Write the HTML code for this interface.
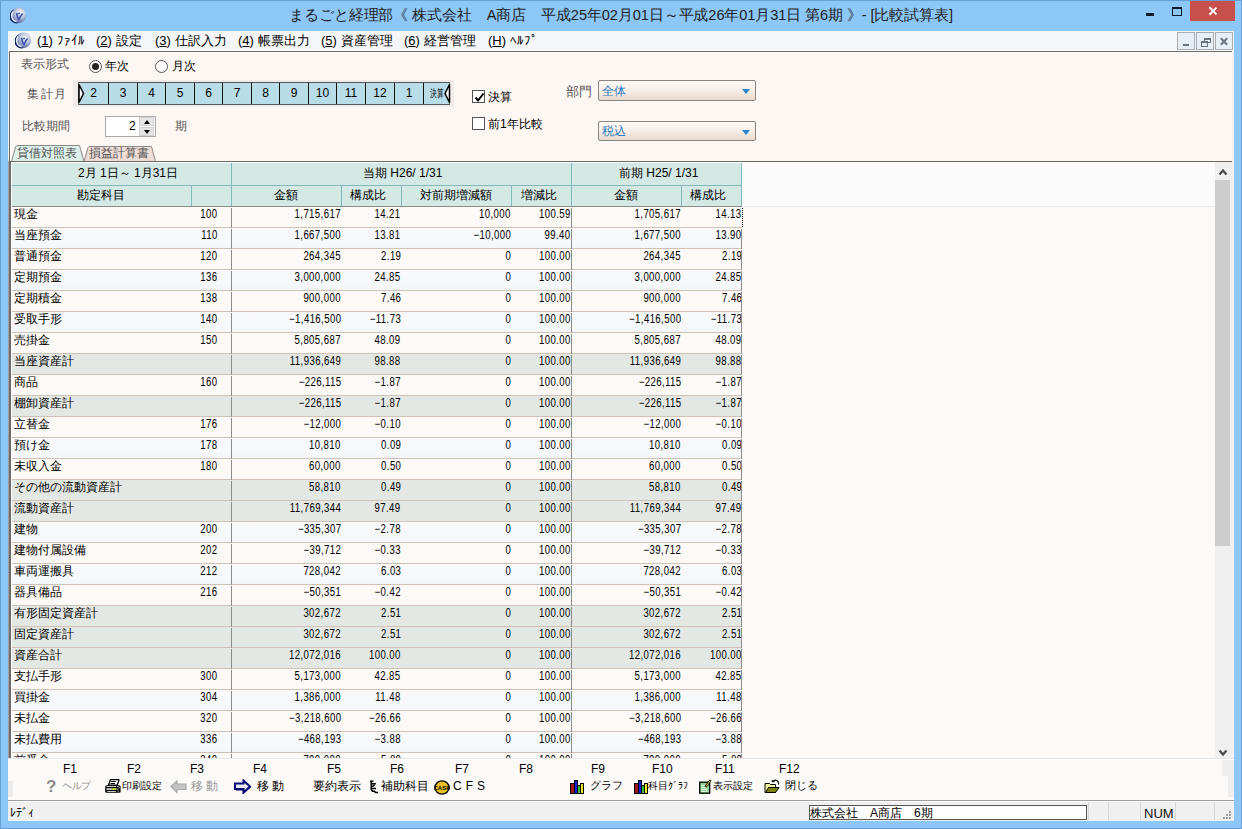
<!DOCTYPE html>
<html><head><meta charset="utf-8"><title>比較試算表</title>
<style>
*{box-sizing:border-box;margin:0;padding:0}
html,body{width:1242px;height:829px;overflow:hidden}
body{position:relative;background:#8cc7f7;font-family:"Liberation Sans",sans-serif;font-size:12px;color:#000;line-height:1}
.a{position:absolute}
#frame{position:absolute;left:0;top:0;width:1242px;height:829px;border:1px solid #6a9fd3}
/* title */
#ttl{position:absolute;left:0;top:8px;width:1242px;text-align:center;font-size:14.6px;letter-spacing:-0.1px;color:#1e1e1e;white-space:nowrap}
.ico{position:absolute;width:16px;height:16px;border-radius:50%;background:radial-gradient(circle at 40% 35%,#f4f6fb 0,#aab8d8 35%,#4f66a8 70%,#1c2f74 100%)}
#close{position:absolute;left:1190px;top:1px;width:45px;height:20px;background:#c7504c}
#close:before,#close:after{content:"";position:absolute;left:22px;top:5px;width:1.6px;height:10px;background:#fff;transform:rotate(45deg)}
#close:after{transform:rotate(-45deg)}
#min{position:absolute;left:1146px;top:13px;width:8px;height:3px;background:#0e1a2a}
#max{position:absolute;left:1172px;top:7px;width:10px;height:9px;border:1px solid #0e1a2a;border-top-width:2px}
/* menu */
#menu{position:absolute;left:8px;top:31px;width:1226px;height:20px;background:#f5f6f7;border-bottom:1px solid #fff}
.mi{position:absolute;top:34px;font-size:13px;color:#000;white-space:nowrap}
.mdi{position:absolute;top:32px;width:18px;height:18px;border:1px solid #a4acb4;background:#e6eef6}
/* form */
#form{position:absolute;left:9px;top:51px;width:1223px;height:110px;background:#fdf7f3;border-top:1px solid #6c6864;border-left:1px solid #6c6864}
#form:before{content:"";position:absolute;left:0;top:0;right:0;height:1px;background:#fff}
#form:after{content:"";position:absolute;left:0;top:0;bottom:0;width:1px;background:#fff}
.lbl{position:absolute;color:#555;font-size:12px;white-space:nowrap}
.txt{position:absolute;color:#000;font-size:12px;white-space:nowrap}
.radio{position:absolute;width:13px;height:13px;border-radius:50%;border:1px solid #555;background:#fff}
.radio.on:after{content:"";position:absolute;left:2px;top:2px;width:7px;height:7px;border-radius:50%;background:#222}
.chk{position:absolute;width:13px;height:13px;border:1px solid #555;background:#fff}
#strip{position:absolute;left:73px;top:80px;width:381px;height:27px;background:#f0ecea}
#months{position:absolute;left:78px;top:82px;width:372px;height:23px;background:#b8dce8;border:1px solid #555}
.mc{position:absolute;top:0;height:21px;border-left:1px solid #111;font-size:12px;text-align:center;line-height:21px}
.spin{position:absolute;left:105px;top:116px;width:51px;height:21px;border:1px solid #aaa;background:#fff}
.dd{position:absolute;left:598px;width:158px;height:21px;border:1px solid #8a8480;border-radius:2px;background:linear-gradient(#fffaf6,#f4ebe4 60%,#e8d8cc)}
.dd span{position:absolute;left:3px;top:4px;color:#2f7dbf;font-size:12px}
.dd:after{content:"";position:absolute;right:5px;top:8px;border-left:4px solid transparent;border-right:4px solid transparent;border-top:5px solid #2a86c8}
/* tabs */
.tab{position:absolute;top:145px;height:16px;font-size:12px;color:#555;white-space:nowrap}
/* grid */
#grid{position:absolute;left:9px;top:161px;width:1223px;height:597px;background:#fdf9f7;border-top:1px solid #6c6864;border-left:2px solid #6c6c6c;overflow:hidden}
#gridin{position:absolute;left:10px;top:162px;width:1205px;height:596px;overflow:hidden}
.hd{position:absolute;background:#d4e8e4}
.ht{position:absolute;font-size:12px;white-space:nowrap}
.tl{position:absolute;background:#80b8bc}
.vl{position:absolute;top:207px;width:1px;height:551px;background:#8c8c8c}
.row{position:absolute;left:12px;width:730px;height:21px;background:#fdf9f6;border-bottom:1px solid #d2c2b6}
.row.alt{background:linear-gradient(#f9f9fa,#f4f7f9)}
.row.sub{background:#e4e8e4}
.row span{position:absolute;top:1px;white-space:nowrap}
.nm{left:2px}
.n{text-align:right;letter-spacing:0.5px;transform:scaleX(0.8);transform-origin:100% 50%}
.cd{right:524px}
.c1{right:401px}
.c2{right:341px}
.c3{right:231px}
.c4{right:171px}
.c5{right:61px}
.c6{right:0px}
#sb{position:absolute;left:1215px;top:162px;width:17px;height:596px;background:#efefef}
#thumb{position:absolute;left:1215px;top:180px;width:15px;height:366px;background:#cdcdcd}
/* fkeys */
#fbar{position:absolute;left:8px;top:758px;width:1226px;height:43px;background:#fcfaf9;border-top:1px solid #e6e6e6;border-bottom:1px solid #a0a0a0;box-shadow:inset 0 1px 0 #fff}
.fk{position:absolute;top:763px;font-size:12px;white-space:nowrap}
.fb{position:absolute;top:780px;font-size:12px;white-space:nowrap}
/* status */
#status{position:absolute;left:8px;top:801px;width:1226px;height:20px;background:#f0f0f0;border-top:1px solid #fff}

.sbtn{position:absolute;width:15px;height:9px;background:#e6e6e6;border:1px solid #d0d0d0}
.sbtn i{position:absolute;left:3.5px;border-left:3.5px solid transparent;border-right:3.5px solid transparent}
.sbtn i.up{top:1.5px;border-bottom:4px solid #000}
.sbtn i.dn{top:2px;border-top:4px solid #000}
.mx{position:absolute;left:7px;top:4px;width:2px;height:9px;background:#6a7480;transform:rotate(45deg)}
.mx.m2{transform:rotate(-45deg)}
.sep{position:absolute;top:802px;width:1px;height:18px;background:#d8d8d8}
.v{position:absolute;top:1px;width:1px;height:20px;background:#8c8c8c}

</style></head><body>
<div id="frame"></div>
<svg class="a" style="left:10px;top:7px" width="17" height="17" viewBox="0 0 17 17"><defs><radialGradient id="g1" cx="0.62" cy="0.35" r="0.7"><stop offset="0" stop-color="#fbfbff"/><stop offset="0.45" stop-color="#c0c8e0"/><stop offset="0.85" stop-color="#6a78b0"/><stop offset="1" stop-color="#2a3878"/></radialGradient></defs><circle cx="8.3" cy="8.3" r="7.8" fill="url(#g1)"/><path d="M4 2.5 A7 7 0 0 0 9 16 A8 8 0 0 1 4 2.5Z" fill="#102060"/><path d="M3.2 4.5 A6 6 0 0 0 6.5 14.5" fill="none" stroke="#e8f0ff" stroke-width="1.3"/><path d="M6.5 6 Q7.5 11 9 12.5 Q10.5 9 12.5 6.5" fill="none" stroke="#3850a8" stroke-width="1.6"/><circle cx="9" cy="6.5" r="1" fill="#3850a8"/></svg>
<div id="ttl">まるごと経理部《 株式会社　A商店　平成25年02月01日～平成26年01月31日 第6期 》- [比較試算表]</div>
<div id="min"></div><div id="max"></div><div id="close"></div>
<div id="menu"></div>
<svg class="a" style="left:15px;top:32px" width="17" height="17" viewBox="0 0 17 17"><defs><radialGradient id="g2" cx="0.62" cy="0.35" r="0.7"><stop offset="0" stop-color="#fbfbff"/><stop offset="0.45" stop-color="#c0c8e0"/><stop offset="0.85" stop-color="#6a78b0"/><stop offset="1" stop-color="#2a3878"/></radialGradient></defs><circle cx="8.3" cy="8.3" r="7.8" fill="url(#g2)"/><path d="M4 2.5 A7 7 0 0 0 9 16 A8 8 0 0 1 4 2.5Z" fill="#102060"/><path d="M3.2 4.5 A6 6 0 0 0 6.5 14.5" fill="none" stroke="#e8f0ff" stroke-width="1.3"/><path d="M6.5 6 Q7.5 11 9 12.5 Q10.5 9 12.5 6.5" fill="none" stroke="#3850a8" stroke-width="1.6"/><circle cx="9" cy="6.5" r="1" fill="#3850a8"/></svg>
<div class="mi" style="left:37px">(<u>1</u>) ﾌｧｲﾙ</div>
<div class="mi" style="left:96px">(<u>2</u>) 設定</div>
<div class="mi" style="left:155px">(<u>3</u>) 仕訳入力</div>
<div class="mi" style="left:238px">(<u>4</u>) 帳票出力</div>
<div class="mi" style="left:321px">(<u>5</u>) 資産管理</div>
<div class="mi" style="left:404px">(<u>6</u>) 経営管理</div>
<div class="mi" style="left:488px">(<u>H</u>) ﾍﾙﾌﾟ</div>
<div class="mdi" style="left:1177px"><i style="position:absolute;left:5px;top:11px;width:6px;height:2px;background:#6a7480"></i></div>
<div class="mdi" style="left:1196px"><i style="position:absolute;left:7px;top:5px;width:7px;height:5px;border:1px solid #6a7480;border-top-width:2px"></i><i style="position:absolute;left:4px;top:8px;width:7px;height:6px;border:1px solid #6a7480;border-top-width:2px;background:#e6eef6"></i></div>
<div class="mdi" style="left:1215px"><i class="mx"></i><i class="mx m2"></i></div>
<div class="a" style="left:8px;top:51px;width:1226px;height:750px;background:#f4f2f0"></div>
<div id="form"></div>
<div class="lbl" style="left:21px;top:58px">表示形式</div>
<div class="radio on" style="left:89px;top:60px"></div><div class="txt" style="left:105px;top:60px">年次</div>
<div class="radio" style="left:155px;top:60px"></div><div class="txt" style="left:172px;top:60px">月次</div>
<div class="lbl" style="left:27px;top:88px;letter-spacing:1.5px">集計月</div>
<div id="strip"></div>
<div id="months">
<div class="mc" style="left:0;width:29px;border-left:0">2</div>
<div class="mc" style="left:29px;width:29px">3</div>
<div class="mc" style="left:58px;width:28px">4</div>
<div class="mc" style="left:86px;width:29px">5</div>
<div class="mc" style="left:115px;width:28px">6</div>
<div class="mc" style="left:143px;width:29px">7</div>
<div class="mc" style="left:172px;width:28px">8</div>
<div class="mc" style="left:200px;width:29px">9</div>
<div class="mc" style="left:229px;width:28px">10</div>
<div class="mc" style="left:257px;width:29px">11</div>
<div class="mc" style="left:286px;width:29px">12</div>
<div class="mc" style="left:315px;width:29px">1</div>
<div class="mc" style="left:344px;width:27px;font-size:0"><span style="position:absolute;left:6px;top:5px;font-size:11px;line-height:1;transform:scaleX(0.62);transform-origin:0 0;white-space:nowrap">決算</span></div>
</div>
<svg class="a" style="left:78px;top:83px" width="8" height="21"><path d="M1 1.5 L5.5 10.5 L1 19.5 Z" fill="#fff" stroke="#000" stroke-width="1.5"/></svg>
<svg class="a" style="left:443px;top:83px" width="8" height="21"><path d="M6.5 1.5 L2 10.5 L6.5 19.5 Z" fill="#fff" stroke="#000" stroke-width="1.5"/></svg>
<div class="lbl" style="left:22px;top:120px">比較期間</div>
<div class="spin"></div>
<div class="txt" style="left:129px;top:120px">2</div>
<div class="sbtn" style="left:139px;top:117px"><i class="up"></i></div>
<div class="sbtn" style="left:139px;top:127px"><i class="dn"></i></div>
<div class="lbl" style="left:175px;top:120px">期</div>
<div class="chk" style="left:472px;top:90px"><svg style="position:absolute;left:1px;top:1px" width="11" height="11"><path d="M1.5 5.5 L4 8.5 L9.5 1.5" fill="none" stroke="#000" stroke-width="2"/></svg></div><div class="txt" style="left:488px;top:91px">決算</div>
<div class="chk" style="left:472px;top:117px"></div><div class="txt" style="left:488px;top:118px">前1年比較</div>
<div class="lbl" style="left:566px;top:86px;font-size:12.5px">部門</div>
<div class="dd" style="top:80px"><span>全体</span></div>
<div class="dd" style="top:121px;height:20px"><span style="top:3px">税込</span></div>
<svg class="a" style="left:0;top:140px" width="170" height="22">
<path d="M11.5 21.5 L15.5 7 Q16 5.5 18 5.5 L79.5 5.5 L84 21.5 Z" fill="#dcefe9" stroke="#8a8a8a" stroke-width="1"/>
<path d="M84 21.5 L88 7.5 Q88.5 6.5 90 6.5 L151.5 6.5 L155.5 21.5 Z" fill="#eedcd6" stroke="#8a8a8a" stroke-width="1"/>
</svg>
<div class="tab" style="left:17px;top:147px">貸借対照表</div>
<div class="tab" style="left:89px;top:147px">損益計算書</div>
<div class="a" style="left:8px;top:161px;width:1px;height:597px;background:#a8a0a0"></div>
<div id="grid"></div>
<div class="a" style="left:11px;top:162px;width:1204px;height:44px;background:#fbfbfb"></div>
<div class="a" style="left:11px;top:162px;width:1px;height:596px;background:#fff"></div>
<div class="a" style="left:11px;top:162px;width:1204px;height:1px;background:#fff"></div>
<div class="hd" style="left:12px;top:163px;width:730px;height:43px"></div>
<div class="ht" style="left:78px;top:167px">2月 1日～ 1月31日</div>
<div class="ht" style="left:363px;top:167px">当期 H26/ 1/31</div>
<div class="ht" style="left:619px;top:167px">前期 H25/ 1/31</div>
<div class="ht" style="left:77px;top:189px">勘定科目</div>
<div class="ht" style="left:274px;top:189px">金額</div>
<div class="ht" style="left:350px;top:189px">構成比</div>
<div class="ht" style="left:420px;top:189px">対前期増減額</div>
<div class="ht" style="left:521px;top:189px">増減比</div>
<div class="ht" style="left:614px;top:189px">金額</div>
<div class="ht" style="left:690px;top:189px">構成比</div>
<div class="tl" style="left:12px;top:185px;width:730px;height:1px"></div>
<div class="tl" style="left:231px;top:163px;width:1px;height:43px"></div>
<div class="tl" style="left:571px;top:163px;width:1px;height:43px"></div>
<div class="tl" style="left:191px;top:186px;width:1px;height:20px"></div>
<div class="tl" style="left:341px;top:186px;width:1px;height:20px"></div>
<div class="tl" style="left:401px;top:186px;width:1px;height:20px"></div>
<div class="tl" style="left:511px;top:186px;width:1px;height:20px"></div>
<div class="tl" style="left:681px;top:186px;width:1px;height:20px"></div>
<div class="tl" style="left:741px;top:163px;width:1px;height:43px"></div>
<div class="a" style="left:12px;top:206px;width:730px;height:1px;background:#8c8c8c"></div>
<div class="a" style="left:742px;top:206px;width:473px;height:1px;background:#e8ecf0"></div>
<div class="row" style="top:207px"><span class="nm">現金</span><span class="n cd">100</span><span class="n c1">1,715,617</span><span class="n c2">14.21</span><span class="n c3">10,000</span><span class="n c4">100.59</span><span class="n c5">1,705,617</span><span class="n c6">14.13</span><i class="v" style="left:219px"></i><i class="v" style="left:559px"></i></div>
<div class="row alt" style="top:228px"><span class="nm">当座預金</span><span class="n cd">110</span><span class="n c1">1,667,500</span><span class="n c2">13.81</span><span class="n c3">−10,000</span><span class="n c4">99.40</span><span class="n c5">1,677,500</span><span class="n c6">13.90</span><i class="v" style="left:219px"></i><i class="v" style="left:559px"></i><i class="v" style="left:729px"></i></div>
<div class="row" style="top:249px"><span class="nm">普通預金</span><span class="n cd">120</span><span class="n c1">264,345</span><span class="n c2">2.19</span><span class="n c3">0</span><span class="n c4">100.00</span><span class="n c5">264,345</span><span class="n c6">2.19</span><i class="v" style="left:219px"></i><i class="v" style="left:559px"></i><i class="v" style="left:729px"></i></div>
<div class="row alt" style="top:270px"><span class="nm">定期預金</span><span class="n cd">136</span><span class="n c1">3,000,000</span><span class="n c2">24.85</span><span class="n c3">0</span><span class="n c4">100.00</span><span class="n c5">3,000,000</span><span class="n c6">24.85</span><i class="v" style="left:219px"></i><i class="v" style="left:559px"></i><i class="v" style="left:729px"></i></div>
<div class="row" style="top:291px"><span class="nm">定期積金</span><span class="n cd">138</span><span class="n c1">900,000</span><span class="n c2">7.46</span><span class="n c3">0</span><span class="n c4">100.00</span><span class="n c5">900,000</span><span class="n c6">7.46</span><i class="v" style="left:219px"></i><i class="v" style="left:559px"></i><i class="v" style="left:729px"></i></div>
<div class="row alt" style="top:312px"><span class="nm">受取手形</span><span class="n cd">140</span><span class="n c1">−1,416,500</span><span class="n c2">−11.73</span><span class="n c3">0</span><span class="n c4">100.00</span><span class="n c5">−1,416,500</span><span class="n c6">−11.73</span><i class="v" style="left:219px"></i><i class="v" style="left:559px"></i><i class="v" style="left:729px"></i></div>
<div class="row" style="top:333px"><span class="nm">売掛金</span><span class="n cd">150</span><span class="n c1">5,805,687</span><span class="n c2">48.09</span><span class="n c3">0</span><span class="n c4">100.00</span><span class="n c5">5,805,687</span><span class="n c6">48.09</span><i class="v" style="left:219px"></i><i class="v" style="left:559px"></i><i class="v" style="left:729px"></i></div>
<div class="row sub" style="top:354px"><span class="nm">当座資産計</span><span class="n cd"></span><span class="n c1">11,936,649</span><span class="n c2">98.88</span><span class="n c3">0</span><span class="n c4">100.00</span><span class="n c5">11,936,649</span><span class="n c6">98.88</span><i class="v" style="left:219px"></i><i class="v" style="left:559px"></i><i class="v" style="left:729px"></i></div>
<div class="row" style="top:375px"><span class="nm">商品</span><span class="n cd">160</span><span class="n c1">−226,115</span><span class="n c2">−1.87</span><span class="n c3">0</span><span class="n c4">100.00</span><span class="n c5">−226,115</span><span class="n c6">−1.87</span><i class="v" style="left:219px"></i><i class="v" style="left:559px"></i><i class="v" style="left:729px"></i></div>
<div class="row sub" style="top:396px"><span class="nm">棚卸資産計</span><span class="n cd"></span><span class="n c1">−226,115</span><span class="n c2">−1.87</span><span class="n c3">0</span><span class="n c4">100.00</span><span class="n c5">−226,115</span><span class="n c6">−1.87</span><i class="v" style="left:219px"></i><i class="v" style="left:559px"></i><i class="v" style="left:729px"></i></div>
<div class="row" style="top:417px"><span class="nm">立替金</span><span class="n cd">176</span><span class="n c1">−12,000</span><span class="n c2">−0.10</span><span class="n c3">0</span><span class="n c4">100.00</span><span class="n c5">−12,000</span><span class="n c6">−0.10</span><i class="v" style="left:219px"></i><i class="v" style="left:559px"></i><i class="v" style="left:729px"></i></div>
<div class="row alt" style="top:438px"><span class="nm">預け金</span><span class="n cd">178</span><span class="n c1">10,810</span><span class="n c2">0.09</span><span class="n c3">0</span><span class="n c4">100.00</span><span class="n c5">10,810</span><span class="n c6">0.09</span><i class="v" style="left:219px"></i><i class="v" style="left:559px"></i><i class="v" style="left:729px"></i></div>
<div class="row" style="top:459px"><span class="nm">未収入金</span><span class="n cd">180</span><span class="n c1">60,000</span><span class="n c2">0.50</span><span class="n c3">0</span><span class="n c4">100.00</span><span class="n c5">60,000</span><span class="n c6">0.50</span><i class="v" style="left:219px"></i><i class="v" style="left:559px"></i><i class="v" style="left:729px"></i></div>
<div class="row sub" style="top:480px"><span class="nm">その他の流動資産計</span><span class="n cd"></span><span class="n c1">58,810</span><span class="n c2">0.49</span><span class="n c3">0</span><span class="n c4">100.00</span><span class="n c5">58,810</span><span class="n c6">0.49</span><i class="v" style="left:219px"></i><i class="v" style="left:559px"></i><i class="v" style="left:729px"></i></div>
<div class="row sub" style="top:501px"><span class="nm">流動資産計</span><span class="n cd"></span><span class="n c1">11,769,344</span><span class="n c2">97.49</span><span class="n c3">0</span><span class="n c4">100.00</span><span class="n c5">11,769,344</span><span class="n c6">97.49</span><i class="v" style="left:219px"></i><i class="v" style="left:559px"></i><i class="v" style="left:729px"></i></div>
<div class="row alt" style="top:522px"><span class="nm">建物</span><span class="n cd">200</span><span class="n c1">−335,307</span><span class="n c2">−2.78</span><span class="n c3">0</span><span class="n c4">100.00</span><span class="n c5">−335,307</span><span class="n c6">−2.78</span><i class="v" style="left:219px"></i><i class="v" style="left:559px"></i><i class="v" style="left:729px"></i></div>
<div class="row" style="top:543px"><span class="nm">建物付属設備</span><span class="n cd">202</span><span class="n c1">−39,712</span><span class="n c2">−0.33</span><span class="n c3">0</span><span class="n c4">100.00</span><span class="n c5">−39,712</span><span class="n c6">−0.33</span><i class="v" style="left:219px"></i><i class="v" style="left:559px"></i><i class="v" style="left:729px"></i></div>
<div class="row alt" style="top:564px"><span class="nm">車両運搬具</span><span class="n cd">212</span><span class="n c1">728,042</span><span class="n c2">6.03</span><span class="n c3">0</span><span class="n c4">100.00</span><span class="n c5">728,042</span><span class="n c6">6.03</span><i class="v" style="left:219px"></i><i class="v" style="left:559px"></i><i class="v" style="left:729px"></i></div>
<div class="row" style="top:585px"><span class="nm">器具備品</span><span class="n cd">216</span><span class="n c1">−50,351</span><span class="n c2">−0.42</span><span class="n c3">0</span><span class="n c4">100.00</span><span class="n c5">−50,351</span><span class="n c6">−0.42</span><i class="v" style="left:219px"></i><i class="v" style="left:559px"></i><i class="v" style="left:729px"></i></div>
<div class="row sub" style="top:606px"><span class="nm">有形固定資産計</span><span class="n cd"></span><span class="n c1">302,672</span><span class="n c2">2.51</span><span class="n c3">0</span><span class="n c4">100.00</span><span class="n c5">302,672</span><span class="n c6">2.51</span><i class="v" style="left:219px"></i><i class="v" style="left:559px"></i><i class="v" style="left:729px"></i></div>
<div class="row sub" style="top:627px"><span class="nm">固定資産計</span><span class="n cd"></span><span class="n c1">302,672</span><span class="n c2">2.51</span><span class="n c3">0</span><span class="n c4">100.00</span><span class="n c5">302,672</span><span class="n c6">2.51</span><i class="v" style="left:219px"></i><i class="v" style="left:559px"></i><i class="v" style="left:729px"></i></div>
<div class="row sub" style="top:648px"><span class="nm">資産合計</span><span class="n cd"></span><span class="n c1">12,072,016</span><span class="n c2">100.00</span><span class="n c3">0</span><span class="n c4">100.00</span><span class="n c5">12,072,016</span><span class="n c6">100.00</span><i class="v" style="left:219px"></i><i class="v" style="left:559px"></i><i class="v" style="left:729px"></i></div>
<div class="row" style="top:669px"><span class="nm">支払手形</span><span class="n cd">300</span><span class="n c1">5,173,000</span><span class="n c2">42.85</span><span class="n c3">0</span><span class="n c4">100.00</span><span class="n c5">5,173,000</span><span class="n c6">42.85</span><i class="v" style="left:219px"></i><i class="v" style="left:559px"></i><i class="v" style="left:729px"></i></div>
<div class="row alt" style="top:690px"><span class="nm">買掛金</span><span class="n cd">304</span><span class="n c1">1,386,000</span><span class="n c2">11.48</span><span class="n c3">0</span><span class="n c4">100.00</span><span class="n c5">1,386,000</span><span class="n c6">11.48</span><i class="v" style="left:219px"></i><i class="v" style="left:559px"></i><i class="v" style="left:729px"></i></div>
<div class="row" style="top:711px"><span class="nm">未払金</span><span class="n cd">320</span><span class="n c1">−3,218,600</span><span class="n c2">−26.66</span><span class="n c3">0</span><span class="n c4">100.00</span><span class="n c5">−3,218,600</span><span class="n c6">−26.66</span><i class="v" style="left:219px"></i><i class="v" style="left:559px"></i><i class="v" style="left:729px"></i></div>
<div class="row alt" style="top:732px"><span class="nm">未払費用</span><span class="n cd">336</span><span class="n c1">−468,193</span><span class="n c2">−3.88</span><span class="n c3">0</span><span class="n c4">100.00</span><span class="n c5">−468,193</span><span class="n c6">−3.88</span><i class="v" style="left:219px"></i><i class="v" style="left:559px"></i><i class="v" style="left:729px"></i></div>
<div class="row" style="top:753px"><span class="nm">前受金</span><span class="n cd">340</span><span class="n c1">700,000</span><span class="n c2">5.80</span><span class="n c3">0</span><span class="n c4">100.00</span><span class="n c5">700,000</span><span class="n c6">5.80</span><i class="v" style="left:219px"></i><i class="v" style="left:559px"></i><i class="v" style="left:729px"></i></div>
<div class="a" style="left:742px;top:208px;width:1px;height:19px;background:repeating-linear-gradient(#000 0 1px,transparent 1px 2px)"></div>
<div id="sb"></div>
<div id="thumb"></div>
<svg class="a" style="left:1218px;top:167px" width="10" height="10"><path d="M1.5 7.5 L5 3.5 L8.5 7.5" fill="none" stroke="#4a4a4a" stroke-width="2.2"/></svg>
<svg class="a" style="left:1218px;top:748px" width="10" height="10"><path d="M1.5 2.5 L5 6.5 L8.5 2.5" fill="none" stroke="#4a4a4a" stroke-width="2.2"/></svg>
<div id="fbar"></div>
<div class="a" style="left:1222px;top:760px;width:12px;height:16px;background:#eeeeee"></div>
<div class="a" style="left:1228px;top:776px;width:6px;height:21px;background:#eeeeee"></div>
<div class="fk" style="left:63px">F1</div>
<div class="fk" style="left:127px">F2</div>
<div class="fk" style="left:190px">F3</div>
<div class="fk" style="left:253px">F4</div>
<div class="fk" style="left:327px">F5</div>
<div class="fk" style="left:390px">F6</div>
<div class="fk" style="left:455px">F7</div>
<div class="fk" style="left:519px">F8</div>
<div class="fk" style="left:591px">F9</div>
<div class="fk" style="left:652px">F10</div>
<div class="fk" style="left:715px">F11</div>
<div class="fk" style="left:779px">F12</div>
<div class="fb" style="left:46px;color:#8a8a8a;font-weight:bold;font-size:17px;top:778px">?</div>
<div class="a" style="left:8px;top:781px;width:5px;height:16px;background:#ececec"></div>
<div class="fb" style="left:62px;top:781px;color:#8e8e8e;font-size:10px;letter-spacing:-0.3px">ヘルプ</div>
<svg class="a" style="left:100px;top:774px" width="25" height="24"><path d="M10.6 5.6 H18.8 V6.6 L17.2 11.2 H8.4 Z" fill="#fff" stroke="#000" stroke-width="1.3"/><path d="M11.2 7.5 H15.8 M10.5 9.5 H15" stroke="#000" stroke-width="1.1"/><rect x="5.2" y="11.2" width="15.4" height="7.6" rx="1.6" fill="#000"/><rect x="6.4" y="12.1" width="9.8" height="0.9" fill="#e0e0e0"/><rect x="6.4" y="14.2" width="5.6" height="1.7" fill="#d0d0d8"/><rect x="12" y="14.2" width="4.6" height="1.7" fill="#d8f040"/><rect x="7.2" y="17.1" width="8.8" height="0.9" fill="#e0e0e0"/><rect x="17.4" y="12" width="1" height="1" fill="#fff"/><rect x="18.6" y="13.2" width="1" height="1" fill="#fff"/><rect x="17.4" y="14.4" width="1" height="1.6" fill="#c0c0e0"/><rect x="17.6" y="16.6" width="1" height="1" fill="#fff"/></svg>
<div class="fb" style="left:122px;top:781px;font-size:10px">印刷設定</div>
<svg class="a" style="left:170px;top:780px" width="18" height="14"><path d="M1 6.5 L7 1 V4 H16 V9.5 H7 V12.5 Z" fill="#c4c4c4" stroke="#a8a8a8" stroke-width="1.2"/></svg>
<div class="fb" style="left:191px;color:#989898">移 動</div>
<svg class="a" style="left:233px;top:779px" width="19" height="15"><path d="M17 7.5 L10.5 1.5 V4.5 H2 V10 H10.5 V13.5 Z" fill="#e8e8f0" stroke="#0a0a78" stroke-width="2"/><path d="M3 11 H10.5 V14 L17.5 8" fill="none" stroke="#0a0a78" stroke-width="1.2"/></svg>
<div class="fb" style="left:257px">移 動</div>
<div class="fb" style="left:313px">要約表示</div>
<svg class="a" style="left:369px;top:780px" width="11" height="14"><path d="M1 1.2 H4.5 M2.2 1.2 V9.5 L3.5 11.2 H5.5 L6.5 12.5 H9 M2.2 3.8 H7 M2.2 6.2 H4 L5.5 4.8 M2.2 8.5 H7" fill="none" stroke="#000" stroke-width="1.5"/></svg>
<div class="fb" style="left:381px">補助科目</div>
<svg class="a" style="left:434px;top:780px" width="16" height="15"><ellipse cx="8" cy="7.5" rx="7" ry="6.6" fill="#e8c020" stroke="#000" stroke-width="1.4"/><text x="8" y="10" font-size="6" text-anchor="middle" font-family="Liberation Sans" font-weight="bold" fill="#000">CASH</text></svg>
<div class="fb" style="left:453px;letter-spacing:4px">CFS</div>
<svg class="a" style="left:570px;top:780px" width="14" height="14"><rect x="0.5" y="3.5" width="4" height="10" fill="#a01818" stroke="#000"/><rect x="4.5" y="0.5" width="3" height="13" fill="#1020e0" stroke="#000"/><rect x="7.5" y="5.5" width="3" height="8" fill="#30c030" stroke="#000"/><rect x="10.5" y="3.5" width="3" height="10" fill="#f0f020" stroke="#000"/></svg>
<div class="fb" style="left:590px;font-size:11px">グラフ</div>
<svg class="a" style="left:634px;top:780px" width="14" height="14"><rect x="0.5" y="3.5" width="4" height="10" fill="#a01818" stroke="#000"/><rect x="4.5" y="0.5" width="3" height="13" fill="#1020e0" stroke="#000"/><rect x="7.5" y="5.5" width="3" height="8" fill="#30c030" stroke="#000"/><rect x="10.5" y="3.5" width="3" height="10" fill="#f0f020" stroke="#000"/></svg>
<div class="fb" style="left:648px;top:781px;font-size:10px">科目ｸﾞﾗﾌ</div>
<svg class="a" style="left:699px;top:779px" width="13" height="15"><rect x="0.7" y="3.2" width="10" height="11" fill="#90d090" stroke="#000" stroke-width="1.3"/><path d="M2 6.5 H6 M2 8.5 H8.5 M2 10.5 H8.5 M2 12.5 H8.5" stroke="#f0fff0" stroke-width="0.9"/><path d="M6.5 8 L11.5 1.2" stroke="#000" stroke-width="2.2"/><path d="M7 7.4 L11 2" stroke="#f0f020" stroke-width="1"/></svg>
<div class="fb" style="left:713px;top:781px;font-size:10px">表示設定</div>
<svg class="a" style="left:764px;top:779px" width="16" height="15"><path d="M1 4.5 H5.5 L6.5 5.5 H11.5 V13.5 H1 Z" fill="#f4f4a0" stroke="#000"/><path d="M1.5 13.5 L4.5 8.5 H15 L11.5 13.5 Z" fill="#808010" stroke="#000"/><path d="M8.5 2.5 Q10.5 0.5 13 1.5 Q15 3 14.5 5.5" fill="none" stroke="#000" stroke-width="1.1"/><path d="M8 1 L8.5 3 L10.5 2.5" fill="none" stroke="#000" stroke-width="1"/></svg>
<div class="fb" style="left:785px;font-size:11px">閉じる</div>
<div id="status"></div>
<div class="a" style="left:809px;top:805px;width:278px;height:15px;background:#fff;border:1px solid #555"></div>
<div class="a" style="left:810px;top:807px">株式会社　A商店　6期</div>
<div class="sep" style="left:1088px"></div><div class="sep" style="left:1108px"></div><div class="sep" style="left:1140px"></div><div class="sep" style="left:1175px"></div><div class="sep" style="left:1214px"></div>
<div class="a" style="left:1144px;top:807px;font-size:13px;color:#111">NUM</div>
<svg class="a" style="left:1222px;top:810px" width="10" height="10"><g fill="#a0a0a0"><rect x="7" y="1" width="2" height="2"/><rect x="4" y="4" width="2" height="2"/><rect x="7" y="4" width="2" height="2"/><rect x="1" y="7" width="2" height="2"/><rect x="4" y="7" width="2" height="2"/><rect x="7" y="7" width="2" height="2"/></g></svg>
<div class="a" style="left:10px;top:807px">ﾚﾃﾞｨ</div>

</body></html>
